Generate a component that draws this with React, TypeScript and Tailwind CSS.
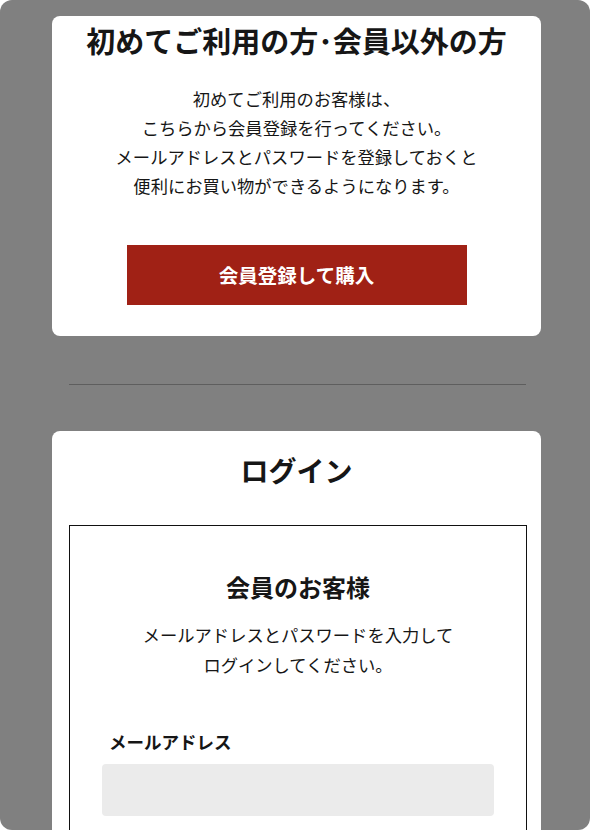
export default function App() {
  return (
    <div className="bg-white w-[590px] h-[830px]">
      <div
        className="w-[590px] h-[830px] rounded-xl overflow-hidden bg-[#808080] pt-4 text-[#161616]"
        style={{ fontFamily: '"Noto Sans CJK JP", "Noto Sans", sans-serif' }}
      >
        {/* 初めての方 */}
        <section className="ml-[52px] w-[489px] bg-white rounded-lg pb-[31px] flex flex-col items-center">
          <h2 className="text-[29px] leading-[48px] font-bold">
            初めてご利用の方･会員以外の方
          </h2>
          <p className="mt-5 text-[17.3px] leading-[29px] text-center">
            初めてご利用のお客様は、
            <br />
            こちらから会員登録を行ってください。
            <br />
            メールアドレスとパスワードを登録しておくと
            <br />
            便利にお買い物ができるようになります。
          </p>
          <button className="mt-[45px] w-[340px] h-[60px] bg-[#a02115] text-white text-[19.5px] font-bold">
            会員登録して購入
          </button>
        </section>

        <hr className="mt-12 ml-[69px] w-[457px] border-0 h-px bg-[#5e5e5e]" />

        {/* ログイン */}
        <section className="mt-[46px] ml-[52px] w-[489px] bg-white rounded-lg pt-[15px] pl-[17px] pb-10">
          <h2 className="text-[28px] leading-[48px] font-bold text-center pr-[17px]">ログイン</h2>
          <div className="mt-[31px] w-[458px] border-[1.5px] border-[#111] px-8 pt-[43px] pb-10">
            <h3 className="text-[24px] leading-[36px] font-bold text-center">会員のお客様</h3>
            <p className="mt-[15px] text-[17.3px] leading-[30px] text-center">
              メールアドレスとパスワードを入力して
              <br />
              ログインしてください。
            </p>
            <label className="block mt-[49px] ml-[7px] text-[17.5px] leading-[26px] font-bold">
              メールアドレス
            </label>
            <input className="mt-[9px] w-full h-[52px] rounded bg-[#ebebeb] outline-none px-3" />
          </div>
        </section>
      </div>
    </div>
  );
}
